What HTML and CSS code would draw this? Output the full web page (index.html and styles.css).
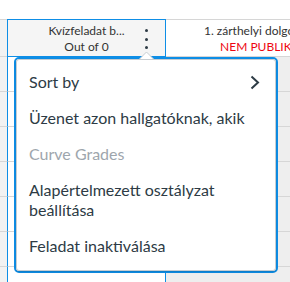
FILE: index.html
```html
<!DOCTYPE html>
<html lang="en">
<head>
    <meta charset="UTF-8">
    <title>Gradebook</title>
    <link rel="stylesheet" href="styles.css">
</head>
<body>
    <div class="grid">
        <div class="row head-row">
            <div class="cell gutter"></div>
            <div class="cell col-a head-a">
                <span class="head-title">Kvízfeladat b...</span>
                <span class="head-sub">Out of 0</span>
                <button class="kebab" aria-label="Options">
                    <i></i><i></i><i></i>
                </button>
            </div>
            <div class="cell col-b head-b">
                <span class="head-title">1. zárthelyi dolgozat b...</span>
                <span class="head-sub unpublished">NEM PUBLIKÁLT</span>
            </div>
        </div>
        <div class="row"><div class="cell gutter"></div><div class="cell col-a"></div><div class="cell col-b"></div></div>
        <div class="row"><div class="cell gutter"></div><div class="cell col-a"></div><div class="cell col-b"></div></div>
        <div class="row"><div class="cell gutter"></div><div class="cell col-a"></div><div class="cell col-b"></div></div>
        <div class="row"><div class="cell gutter"></div><div class="cell col-a"></div><div class="cell col-b"></div></div>
        <div class="row"><div class="cell gutter"></div><div class="cell col-a"></div><div class="cell col-b"></div></div>
        <div class="row"><div class="cell gutter"></div><div class="cell col-a"></div><div class="cell col-b"></div></div>
        <div class="row"><div class="cell gutter"></div><div class="cell col-a"></div><div class="cell col-b"></div></div>
    </div>

    <div class="menu-ring">
        <svg class="caret" width="15" height="8" viewBox="0 0 15 8">
            <path d="M0.5 8 L7.5 1 L14.5 8" fill="#fff" stroke="#c7cdd1" stroke-width="1"/>
        </svg>
        <ul class="menu">
            <li class="menu-item has-sub">
                Sort by
                <svg class="chevron" width="10" height="15" viewBox="0 0 10 15">
                    <path d="M1.5 1.5 L8 7.5 L1.5 13.5" fill="none" stroke="#2d3b45" stroke-width="2"/>
                </svg>
            </li>
            <li class="menu-item">Üzenet azon hallgatóknak, akik</li>
            <li class="menu-item disabled">Curve Grades</li>
            <li class="menu-item">Alapértelmezett osztályzat beállítása</li>
            <li class="menu-item">Feladat inaktiválása</li>
        </ul>
    </div>
</body>
</html>
```

FILE: styles.css
```css
body {
    margin: 0;
    font-family: Lato, "Open Sans", sans-serif;
    color: #2d3b45;
    background: #fff;
    position: relative;
    overflow: hidden;
    height: 282px;
}

.grid {
    height: 282px;
    box-sizing: border-box;
    padding-top: 19px;
    overflow: hidden;
}

.row {
    display: flex;
    height: 35px;
}

.cell {
    box-sizing: border-box;
    border-bottom: 1px solid #d6d6d6;
    flex-shrink: 0;
}

.gutter {
    width: 7px;
    background: #f2f2f2;
}

.col-a {
    width: 159px;
    background: #fff;
    border-left: 1px solid #0e8ee6;
    border-right: 1px solid #0e8ee6;
}

.col-b {
    width: 200px;
    background: #eeeeee;
}

.head-row {
    height: 38px;
}

.head-row .cell {
    border-top: 1px solid #d6d6d6;
}

.head-row .head-a {
    border: 1px solid #0e8ee6;
    background: #f5f5f5;
    position: relative;
}

.head-row .head-b {
    background: #fff;
}

.head-a,
.head-b {
    display: flex;
    flex-direction: column;
    align-items: center;
    padding-top: 3px;
    font-size: 12px;
    line-height: 16px;
    color: #333;
    white-space: nowrap;
}

.unpublished {
    color: #ee0612;
}

.kebab {
    position: absolute;
    left: 132px;
    top: 9px;
    width: 12px;
    height: 20px;
    padding: 0;
    border: none;
    background: none;
    display: flex;
    flex-direction: column;
    align-items: center;
    justify-content: space-between;
}

.kebab i {
    display: block;
    width: 3px;
    height: 3px;
    border-radius: 50%;
    background: #2d3b45;
}

.menu-ring {
    position: absolute;
    left: 14px;
    top: 57px;
    width: 264px;
    height: 216px;
    box-sizing: border-box;
    border: 2px solid #0e8ee6;
    border-radius: 5px;
}

.caret {
    position: absolute;
    left: 123px;
    top: -8px;
}

.menu {
    list-style: none;
    margin: 0;
    height: 100%;
    box-sizing: border-box;
    padding: 4px 0 6px;
    background: #fff;
    border: 1px solid #c7cdd1;
    border-radius: 3px;
    box-shadow: 0 1px 2px rgba(0, 0, 0, 0.15);
}

.menu-item {
    display: flex;
    align-items: center;
    justify-content: space-between;
    padding: 8px 15px 8px 12px;
    font-size: 16px;
    line-height: 20px;
}

.menu-item.disabled {
    color: #9ea6ad;
}

.chevron {
    display: block;
}
```
